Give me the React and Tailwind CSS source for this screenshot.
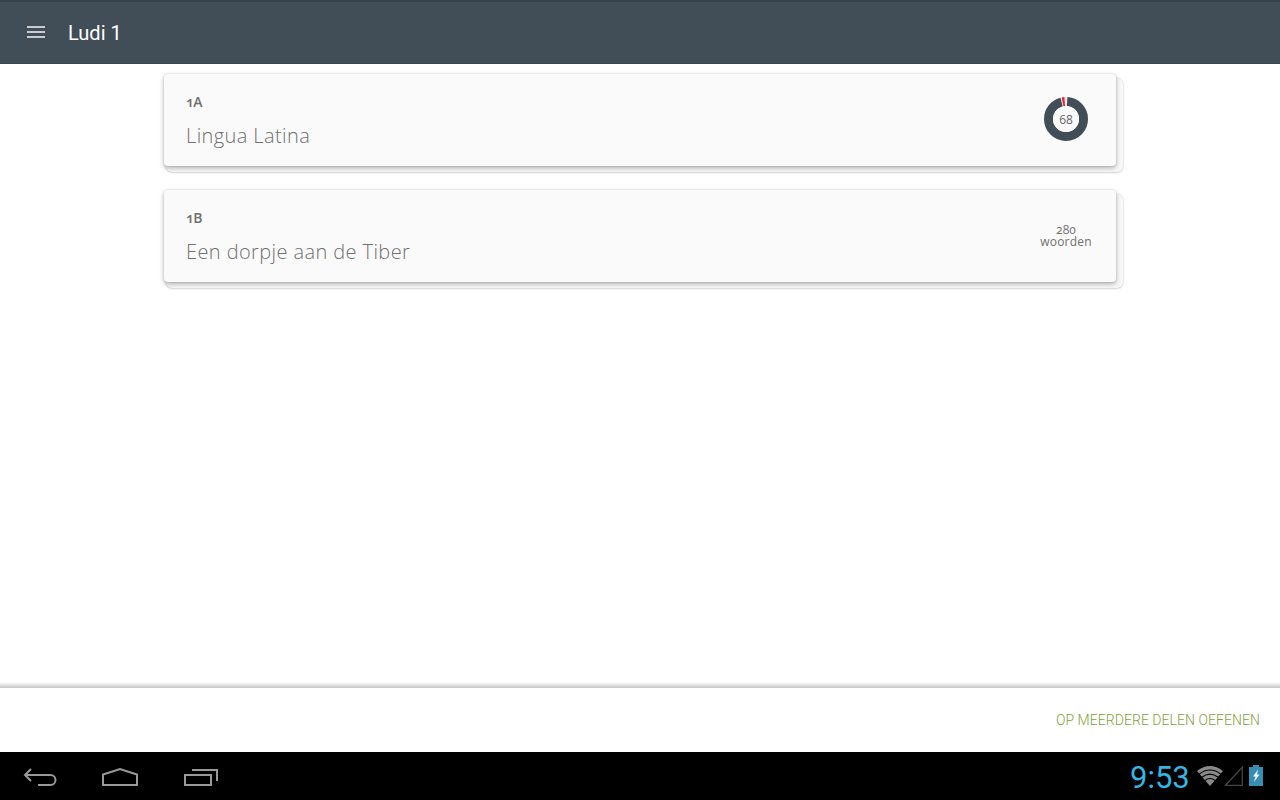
import React from 'react';

const parts = [
  { code: '1A', title: 'Lingua Latina', progress: 68 },
  { code: '1B', title: 'Een dorpje aan de Tiber', words: 280 },
];

const Header = () => (
  <header className="flex h-16 shrink-0 items-center border-t-2 border-b border-t-[#34414a] border-b-[#394750] bg-[#414e57] pl-[27px]">
    <button aria-label="Menu" className="mb-[2px] flex w-[18px] flex-col gap-[3px]">
      <span className="h-0.5 bg-[#c9ccce]" />
      <span className="h-0.5 bg-[#c9ccce]" />
      <span className="h-0.5 bg-[#c9ccce]" />
    </button>
    <h1 className="ml-[23px] font-['Roboto',sans-serif] text-[20px] leading-6 text-white">Ludi 1</h1>
  </header>
);

const ProgressRing = ({ value }) => (
  <div className="mr-[6px] mb-[2px] grid size-11 place-items-center">
    <svg viewBox="0 0 44 44" className="col-start-1 row-start-1 size-11" fill="none">
      <circle cx="22" cy="22" r="17.5" stroke="#e6e8e9" strokeWidth="9" />
      <g strokeWidth="9" transform="rotate(-90 22 22)">
        <circle cx="22" cy="22" r="17.5" stroke="#414e57" pathLength="360" strokeDasharray="341 360" strokeDashoffset="-4" />
        <circle cx="22" cy="22" r="17.5" stroke="#f8202c" pathLength="360" strokeDasharray="7 353" strokeDashoffset="-348.5" />
      </g>
      <circle cx="22" cy="22" r="13" fill="#fafafa" />
    </svg>
    <span className="col-start-1 row-start-1 pt-[2px] text-[12px] leading-none text-[#666]">{value}</span>
  </div>
);

const PartCard = ({ part }) => (
  <div className="relative h-[92px] w-[952px]">
    {/* Second sheet of the stack */}
    <div className="absolute top-1 -right-[7px] -bottom-[6px] left-0.5 rounded-md bg-[#f8f8f8] shadow-[0_0_2px_rgba(0,0,0,0.18),0_1px_2px_rgba(0,0,0,0.12)]" />
    <div className="relative flex h-full items-center justify-between rounded-[4px] bg-[#fafafa] pr-[22px] pl-[22px] shadow-[0_0_2px_rgba(0,0,0,0.12),0_2px_5px_rgba(0,0,0,0.3)]">
      <div className="flex flex-col gap-3">
        <span className="text-[14px] leading-5 font-semibold tracking-[-0.6px] text-[#707070] oldstyle-nums">{part.code}</span>
        <span className="text-[20px] leading-6 font-light tracking-[0.4px] text-[#707070]">{part.title}</span>
      </div>
      {part.progress ? (
        <ProgressRing value={part.progress} />
      ) : (
        <div className="flex w-[56px] flex-col items-center text-[12px] leading-3 tracking-[0.2px] text-[#707070] oldstyle-nums">
          <span>{part.words}</span>
          <span>woorden</span>
        </div>
      )}
    </div>
  </div>
);

const BackIcon = () => (
  <svg width="34" height="20" viewBox="0 0 34 20" fill="none" stroke="#999" strokeWidth="2">
    <path d="M8 2 2 8l6 6M2 8h25.5a5 5 0 0 1 0 10H15" />
  </svg>
);

const HomeIcon = () => (
  <svg width="38" height="20" viewBox="0 0 38 20" fill="none" stroke="#999" strokeWidth="2">
    <path d="M2 18V7.5L19 2l17 5.5V18Z" />
  </svg>
);

const RecentIcon = () => (
  <svg width="35" height="20" viewBox="0 0 35 20" fill="none" stroke="#999" strokeWidth="2">
    <path d="M2 8h26v10h-26ZM9 3h25v11" />
  </svg>
);

const WifiIcon = () => (
  <svg width="26" height="20" viewBox="0 0 26 20">
    <path d="M0 5Q13-5 26 5L13 20Z" fill="#8a8a8a" />
    <path d="M2 8.2Q13-.3 24 8.2M4.5 11.5Q13 4.7 21.5 11.5M7.5 14.8Q13 10.2 18.5 14.8" fill="none" stroke="#000" strokeWidth="1.1" />
  </svg>
);

const SystemBar = () => (
  <div className="flex h-12 shrink-0 items-center justify-between bg-black">
    <div className="flex items-center pt-px pl-[23px]">
      <BackIcon />
      <span className="w-11" />
      <HomeIcon />
      <span className="w-11" />
      <RecentIcon />
    </div>
    <div className="flex items-center pr-[17px]">
      <span className="mr-[8px] w-[59px] pt-[3px] font-['Roboto',sans-serif] text-[31px] leading-none whitespace-nowrap text-[#33b5e5]">9:53</span>
      <WifiIcon />
      <svg className="ml-px" width="20" height="21" viewBox="0 0 20 21" fill="none" stroke="#444" strokeWidth="1.3">
        <path d="M1.5 19.3 18.3 1.2V19.3Z" />
      </svg>
      <svg className="mb-px ml-[5px]" width="14" height="21" viewBox="0 0 14 21">
        <path d="M4 0h6v2h4v19H0V2h4Z" fill="#358fb2" />
        <path d="M9 4.5 4 11.5h2.5L5 17l5.5-7.5H8Z" fill="#f4f8fa" />
      </svg>
    </div>
  </div>
);

export default function App() {
  return (
    <div className="flex h-screen flex-col overflow-hidden bg-white font-['Open_Sans',sans-serif]">
      <Header />

      <main className="flex flex-1 flex-col items-center gap-6 pt-[10px]">
        {parts.map((part) => (
          <PartCard key={part.code} part={part} />
        ))}
      </main>

      <div className="h-[6px] shrink-0 bg-linear-to-b from-white to-[#c6c6c6]" />
      <footer className="flex h-16 shrink-0 items-center justify-end bg-white pr-5">
        <button className="font-['Roboto',sans-serif] text-[14px] font-light tracking-[0.05px] text-[#7fa23c]">OP MEERDERE DELEN OEFENEN</button>
      </footer>

      <SystemBar />
    </div>
  );
}
